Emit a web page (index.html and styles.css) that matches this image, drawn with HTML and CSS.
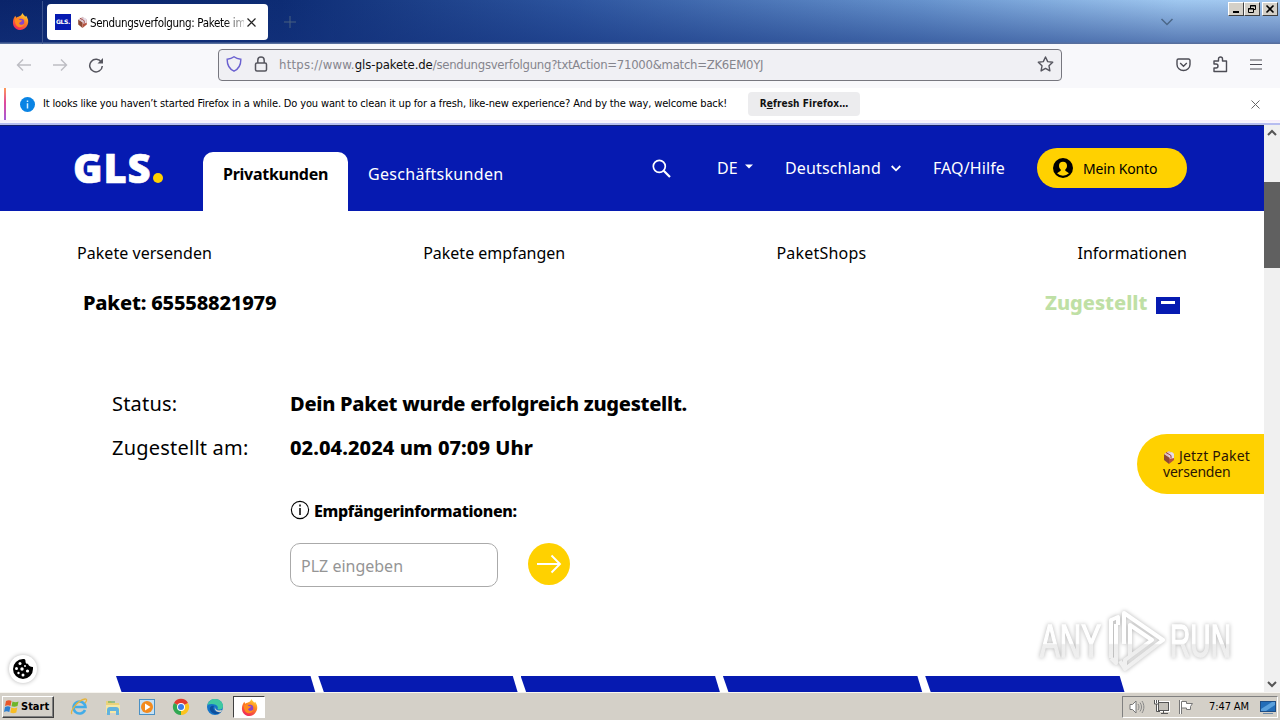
FILE: index.html
```html
<!DOCTYPE html>
<html lang="de">
<head>
<meta charset="utf-8">
<title>Sendungsverfolgung: Pakete im Blick</title>
<link rel="stylesheet" href="styles.css">
</head>
<body>
<svg class="defs" width="0" height="0">
  <defs>
    <linearGradient id="flame" x1="0.8" y1="0" x2="0.3" y2="1"><stop offset="0" stop-color="#ffe23e"/><stop offset=".4" stop-color="#ff8a1f"/><stop offset="1" stop-color="#f0245c"/></linearGradient>
    <symbol id="firefox" viewBox="0 0 18 18">
      <path d="M9 3C10 2.500 10.500 1 11 0c1 2 2 2.500 3 4l1-1c2 3 3 6 1.500 9.500C15 16 12 18 9 18 4 18 1 14.500 1 10c0-3 1-5 2.500-7l1 2C6 4 7.500 4 9 3z" fill="url(#flame)"/>
      <circle cx="9.500" cy="9.500" r="3.500" fill="#8a45c8"/>
      <path d="M3 7c2-2 4-1.500 5 .5l3 .5c-1 1.500-3 1.500-3.500 3 1 2 4 2 5.500 0-.5 3-3 4-5 4-3 0-5-3-5-8z" fill="#ff8b1e"/>
    </symbol>
    <symbol id="box" viewBox="0 0 12 14">
      <path d="M1 4l5 3v7l-5-4z" fill="#8c4a36"/><path d="M6 7l5-3v6l-5 4z" fill="#b5533f"/>
      <path d="M1 4l5-3 5 3-5 3.500z" fill="#d9c0c4"/><path d="M5 4l4-2 2 2v4L7 9z" fill="#e6dce6"/><path d="M3 2.500l5 3v3" stroke="#a03a38" fill="none"/>
    </symbol>
  </defs>
</svg>

<header class="tabbar">
  <div class="pinned"><svg width="17" height="17"><use href="#firefox"/></svg></div>
  <div class="tab">
    <span class="favicon">GLS.</span>
    <svg class="tab-box" width="11" height="12"><use href="#box"/></svg>
    <span class="tab-title">Sendungsverfolgung: Pakete im</span>
    <svg class="tab-close" width="9" height="9" viewBox="0 0 9 9"><path d="M.5.5l8 8m0-8l-8 8" stroke="#222" stroke-width="1.200"/></svg>
  </div>
  <svg class="newtab" width="12" height="12" viewBox="0 0 12 12"><path d="M6 0v12M0 6h12" stroke="#496080"/></svg>
  <svg class="alltabs" width="14" height="8" viewBox="0 0 14 8"><path d="M1.500 1L7 6.500 12.500 1" fill="none" stroke="#4c6788" stroke-width="1.500"/></svg>
  <div class="winbtns">
    <span class="winbtn"><svg width="12" height="10" viewBox="0 0 12 10"><path d="M3 8h6" stroke="#000" stroke-width="2"/></svg></span>
    <span class="winbtn"><svg width="12" height="10" viewBox="0 0 12 10"><path d="M4.500 4V1.500h5v4H8M4 2h6" stroke="#000" fill="none"/><path d="M2.500 4.500h5v4h-5zM2 5h6" stroke="#000" fill="none"/></svg></span>
    <span class="winbtn last"><svg width="12" height="10" viewBox="0 0 12 10"><path d="M2.500 1.500l7 7m0-7l-7 7" stroke="#000" stroke-width="1.600"/></svg></span>
  </div>
</header>

<nav class="toolbar">
  <svg class="back" width="16" height="14" viewBox="0 0 16 14"><path d="M15 7H1.500M7 1.500L1.500 7 7 12.500" fill="none" stroke="#bdbdc3" stroke-width="1.400"/></svg>
  <svg class="forward" width="16" height="14" viewBox="0 0 16 14"><path d="M1 7h13.500M9 1.500L14.500 7 9 12.500" fill="none" stroke="#bdbdc3" stroke-width="1.400"/></svg>
  <svg class="reload" width="16" height="16" viewBox="0 0 16 16"><path d="M13.500 5.500A6.300 6.300 0 1 0 14.300 9" fill="none" stroke="#55555e" stroke-width="1.500"/><path d="M15 1v5.500H9.500z" fill="#55555e"/></svg>
  <div class="urlbar">
    <svg class="shield" width="16" height="16" viewBox="0 0 16 16"><path d="M8 .8C6 2.300 3.500 3 1.200 3.200 1 9 3.500 13 8 15.200c4.500-2.200 7-6.200 6.800-12C12.500 3 10 2.300 8 .8z" fill="none" stroke="#6a60d0" stroke-width="1.400"/></svg>
    <svg class="lock" width="14" height="16" viewBox="0 0 14 16"><rect x="1.500" y="7" width="11" height="8" rx="1.500" fill="none" stroke="#55555e" stroke-width="1.500"/><path d="M3.800 7V4.300a3.200 3.200 0 0 1 6.400 0V7" fill="none" stroke="#55555e" stroke-width="1.500"/></svg>
    <span class="url"><span class="u1">https://www.</span><b>gls-pakete.de</b><span class="u2">/sendungsverfolgung?txtAction=71000&amp;match=ZK6EM0YJ</span></span>
    <svg class="star" width="17" height="16" viewBox="0 0 17 16"><path d="M8.500 1l2.200 4.600 5 .7-3.700 3.500.9 5.100-4.400-2.500-4.400 2.500.9-5.100L1.300 6.300l5-.7z" fill="none" stroke="#55555e" stroke-width="1.400" stroke-linejoin="round"/></svg>
  </div>
  <svg class="pocket" width="15" height="14" viewBox="0 0 15 14"><path d="M2.500 1h10a1.500 1.500 0 0 1 1.500 1.500V6.500a6.500 6 0 0 1-13 0V2.500A1.500 1.500 0 0 1 2.500 1z" fill="none" stroke="#4c4c55" stroke-width="1.400"/><path d="M4.200 5l3.300 3.200L10.800 5" fill="none" stroke="#4c4c55" stroke-width="1.400"/></svg>
  <svg class="ext" width="15" height="17" viewBox="0 0 15 17"><path d="M1 15.500V12h2a2 2 0 0 0 0-4H1V5h4.500V3a2 2 0 0 1 4 0v2h4v10.500z" fill="none" stroke="#4c4c55" stroke-width="1.400" stroke-linejoin="round"/></svg>
  <svg class="menu" width="12" height="11" viewBox="0 0 12 11"><path d="M0 1h12M0 5.500h12M0 10h12" stroke="#4c4c55" stroke-width="1.200"/></svg>
</nav>

<div class="notice">
  <span class="notice-stripe"></span>
  <svg class="info" width="15" height="15" viewBox="0 0 15 15"><circle cx="7.500" cy="7.500" r="7.500" fill="#0a84e4"/><path d="M7.500 6.300v5.200M7.500 3.500v1.500" stroke="#d8f0ff" stroke-width="1.500"/></svg>
  <span class="notice-text">It looks like you haven’t started Firefox in a while. Do you want to clean it up for a fresh, like-new experience? And by the way, welcome back!</span>
  <button class="refresh">R<u>e</u>fresh Firefox…</button>
  <svg class="notice-close" width="9" height="9" viewBox="0 0 9 9"><path d="M.5.5l8 8m0-8l-8 8" stroke="#666"/></svg>
</div>

<div class="view">
  <main class="page">
    <header class="site-head">
      <div class="logo"><span>GLS</span><i></i></div>
      <div class="seg active"><span class="t-priv">Privatkunden</span></div>
      <div class="seg"><span class="t-gesch">Geschäftskunden</span></div>
      <svg class="search" width="19" height="19" viewBox="0 0 19 19"><circle cx="7.300" cy="7.300" r="6" fill="none" stroke="#fff" stroke-width="1.700"/><path d="M11.700 11.700L18 18" stroke="#fff" stroke-width="2.200"/></svg>
      <span class="lang">DE</span>
      <svg class="caret" width="8" height="5" viewBox="0 0 8 5"><path d="M0 .5h8L4 4.500z" fill="#fff"/></svg>
      <span class="country">Deutschland</span>
      <svg class="chev" width="10" height="7" viewBox="0 0 10 7"><path d="M.7 1L5 5.300 9.300 1" fill="none" stroke="#fff" stroke-width="1.800"/></svg>
      <span class="faq">FAQ/Hilfe</span>
      <a class="account">
        <svg width="20" height="20" viewBox="0 0 20 20"><circle cx="10" cy="10" r="10" fill="#000"/><path d="M10 3.700c2.500 0 4 1.600 4 4 0 1.700-.7 3-1.700 3.800v1.300l3.700 2.400a8.500 8.500 0 0 1-12 0l3.700-2.400v-1.300C6.700 10.700 6 9.400 6 7.700c0-2.400 1.500-4 4-4z" fill="#ffd100"/></svg>
        <span>Mein Konto</span>
      </a>
    </header>
    <nav class="subnav">
      <span class="n1">Pakete versenden</span><span class="n2">Pakete empfangen</span><span class="n3">PaketShops</span><span class="n4">Informationen</span>
    </nav>
    <section class="parcel">
      <h1>Paket: 65558821979</h1>
      <span class="state">Zugestellt</span>
      <span class="collapse"></span>
    </section>
    <section class="details">
      <div class="row"><span class="label l1">Status:</span><strong class="s1">Dein Paket wurde erfolgreich zugestellt.</strong></div>
      <div class="row"><span class="label l2">Zugestellt am:</span><strong class="s2">02.04.2024 um 07:09 Uhr</strong></div>
      <div class="recipient">
        <svg width="20" height="20" viewBox="0 0 20 20"><circle cx="10" cy="10" r="8.600" fill="none" stroke="#000" stroke-width="1.100"/><path d="M10 8v7M10 4.500v2" stroke="#000" stroke-width="1.500"/></svg>
        <strong>Empfängerinformationen:</strong>
      </div>
      <form class="zip">
        <div class="field"><span>PLZ eingeben</span></div>
        <span class="go"><svg width="26" height="20" viewBox="0 0 26 20"><path d="M1 10h23M15.500 1.500L24 10l-8.500 8.500" fill="none" stroke="#fff" stroke-width="1.900"/></svg></span>
      </form>
    </section>
    <div class="steps"><i></i><i></i><i></i><i></i><i></i></div>
    <a class="send"><svg width="12" height="14"><use href="#box"/></svg><span class="send1">Jetzt Paket</span><br><span class="send2">versenden</span></a>
    <span class="cookie"><svg width="20" height="20" viewBox="0 0 20 20"><path d="M10 0c2 0 2.500.5 2.500 2.500 0 1.500 1 2.500 2.500 2.300.3 2 2 3.200 5 3.200v2A10 10 0 1 1 10 0z"/><g fill="#fff"><circle cx="7" cy="4.500" r="1.500"/><circle cx="3.500" cy="9.500" r="1.500"/><circle cx="9" cy="10" r="1.700"/><circle cx="14.500" cy="12" r="1.600"/><circle cx="5.500" cy="14" r="1.200"/><circle cx="10" cy="16" r="1.500"/><circle cx="12" cy="7" r="1"/></g></svg></span>
    <svg class="watermark" width="200" height="68" viewBox="0 0 200 68">
      <defs><linearGradient id="fade" x1="0" y1="0" x2="0" y2="68" gradientUnits="userSpaceOnUse"><stop offset="0" stop-color="#fff"/><stop offset=".52" stop-color="#fff"/><stop offset=".54" stop-color="#ededed"/><stop offset="1" stop-color="#f2f2f2"/></linearGradient></defs>
      <g class="wm-text">
        <text x="2" y="49" textLength="61" lengthAdjust="spacingAndGlyphs">ANY</text>
        <text x="132" y="49" textLength="61" lengthAdjust="spacingAndGlyphs">RUN</text>
      </g>
      <path d="M86 36V5l39 27-38 29v-9l27-20-22-15v31M82 53l5 8M73 50V12l7-3v8M73 50l5 5V16" fill="none" stroke="url(#fade)" stroke-width="4" stroke-linejoin="round"/>
    </svg>
  </main>
  <aside class="scrollbar">
    <svg width="10" height="7" viewBox="0 0 10 7"><path d="M1 6l4-4 4 4" fill="none" stroke="#555" stroke-width="2"/></svg>
    <span class="thumb"></span>
    <svg width="10" height="7" viewBox="0 0 10 7"><path d="M1 1l4 4 4-4" fill="none" stroke="#555" stroke-width="2"/></svg>
  </aside>
</div>

<footer class="taskbar">
  <div class="start"><svg width="16" height="16" viewBox="0 0 16 16"><path d="M2 2c2-1 4-1 5.500 0L6.500 7C5 6 3 6 1 7z" fill="#e8562a"/><path d="M8.500 2.500c2 1 4 1 6 0L13.500 7c-2 1-4 1-6 .3z" fill="#6fb52c"/><path d="M1 8c2-1 4-1 5.400 0L5.300 13c-2-1-3.500-1-5.300 0z" fill="#2d7fd0"/><path d="M7.300 8.500c2 1 4 1 6 0l-1 5c-2 1-4 1-6 0z" fill="#f8bd24"/></svg><span>Start</span></div>
  <svg class="ti ie" width="18" height="18" viewBox="0 0 18 18"><path d="M15 12a6 6 0 1 1 .5-3H5" fill="none" stroke="#42ace8" stroke-width="2.600"/><path d="M2 16C-1 14 8 2 15 1c3 0 1 3 0 4" fill="none" stroke="#e5b43e" stroke-width="1.300"/></svg>
  <svg class="ti" width="18" height="18" viewBox="0 0 18 18"><path d="M2 3h5l1 2h7v10H2z" fill="#ead27b"/><path d="M2 7h14v8H2z" fill="#f5e7a5"/><path d="M3 17v-5c0-2 1-3 3-3h6c2 0 3 1 3 3v5h-3v-4H6v4z" fill="#62b3de"/><path d="M4 4h7" stroke="#55a955"/></svg>
  <svg class="ti" width="18" height="18" viewBox="0 0 18 18"><rect x="1.500" y="1.500" width="15" height="15" fill="#c6e1f4" stroke="#4a90c4"/><circle cx="9" cy="9" r="6" fill="#f38a1d"/><path d="M7 5.500v7L12.500 9z" fill="#fff"/></svg>
  <svg class="ti" width="18" height="18" viewBox="0 0 18 18"><path d="M9 9L2 5a8 8 0 0 1 14 0z" fill="#e33b2e"/><path d="M9 9v8A8 8 0 0 1 2 5z" fill="#31a852"/><path d="M9 9l7-4A8 8 0 0 1 9 17z" fill="#fcc31e"/><circle cx="9" cy="9" r="4" fill="#fff"/><circle cx="9" cy="9" r="3" fill="#3b7de8"/></svg>
  <svg class="ti" width="18" height="18" viewBox="0 0 18 18"><circle cx="9" cy="9" r="8" fill="#1675c8"/><path d="M1.500 7C3 2 6 1 9 1c5 0 8 3.500 8 7 0 3-2.500 4-5 3.500-1-.5 0-1-.2-2.500C11 6 5 5 1.500 7z" fill="#3fc9a1"/><path d="M8 8c-2 3 1 7 7 6-3 3-9 3-11-2-1-3 2-5 4-4z" fill="#0d4f9e"/><path d="M9 9c0 3 3 4 7 3l-1 2c-4 1-7-2-6-5z" fill="#d5d1c8"/></svg>
  <span class="task-active"><svg width="17" height="17"><use href="#firefox"/></svg></span>
  <div class="tray">
    <svg width="16" height="16" viewBox="0 0 16 16"><path d="M1 5.500h2.500L7 2v12l-3.500-3.500H1z" fill="#fff" stroke="#777"/><path d="M9 5c1.300 2 1.300 4 0 6M11 3.500c2 3 2 6 0 9M13 2c2.500 4 2.500 8 0 12" fill="none" stroke="#888"/></svg>
    <svg width="17" height="16" viewBox="0 0 17 16"><rect x="5.500" y="3.500" width="10" height="8" fill="#c8c5be" stroke="#fff" stroke-width="3"/><rect x="5.500" y="3.500" width="10" height="8" fill="#c4c1ba" stroke="#555"/><path d="M8 14.500h7M10.500 12v2M3.500 5v7.500H7" fill="none" stroke="#555"/><path d="M1.500 1v4h4V1M3.500 1v3" fill="#fff" stroke="#555"/></svg>
    <svg width="17" height="16" viewBox="0 0 17 16"><path d="M2.500 1v14" stroke="#fff" stroke-width="3"/><path d="M1.500 1v14M3.500 8v7" stroke="#777"/><path d="M3.500 2.500h5v2h6l-2 3 0 3h-4v-1.500h-5z" fill="#fff" stroke="#777"/></svg>
    <span class="clock">7:47 AM</span>
    <svg class="desk" width="16" height="13" viewBox="0 0 16 13"><rect x=".5" y=".5" width="15" height="10" fill="#236db8" stroke="#1e4d85"/><path d="M1 8L12 1h3v3L6 10H1z" fill="#5aa0dc"/><path d="M3 12.500h10" stroke="#6d8aa8"/></svg>
  </div>
</footer>
</body>
</html>
```
FILE: styles.css
```css
* { box-sizing: border-box; }
body { margin: 0; width: 1280px; height: 720px; overflow: hidden; display: flex; flex-direction: column; background: #fff; color: #000; font-family: "Noto Sans", sans-serif; white-space: nowrap; }
svg { display: block; flex: none; }
.defs { position: absolute; }
span, strong { flex: none; }

.tabbar { height: 44px; flex: none; display: flex; align-items: center; background: linear-gradient(180deg, rgba(10,40,120,0) 0%, rgba(20,50,125,.5) 95%, #576f9e 98%), linear-gradient(90deg, #0a246a 0%, #0d2c74 22%, #2d559f 45%, #6793cd 72%, #a0c8f0 92%, #a6caf0 100%); font-family: "DejaVu Sans Condensed", "DejaVu Sans", sans-serif; }
.pinned { width: 43px; height: 43px; padding: 12px 0 0 12px; border-right: 1px solid #3b538e; }
.tab { width: 221px; height: 36px; margin-left: 4px; padding-left: 8px; display: flex; align-items: center; background: #fff; border-radius: 4px; }
.favicon { width: 16px; height: 16px; background: #061ab1; color: #fff; font: bold 6px/16px "DejaVu Sans", sans-serif; text-align: center; letter-spacing: -.3px; }
.tab-box { margin-left: 6px; }
.tab-title { width: 154px; margin-left: 2px; overflow: hidden; font-size: 11.500px; letter-spacing: -.32px; -webkit-mask-image: linear-gradient(90deg, #000 134px, transparent 160px); padding-top: 2px; }
.tab-close { margin-left: 3px; }
.newtab { margin-left: 16px; }
.alltabs { margin-left: 864px; }
.winbtns { display: flex; margin-left: 54px; align-self: flex-start; padding-top: 2px; }
.winbtn { width: 16px; height: 14px; background: #d4d0c8; border: 1px solid; border-color: #fff #404040 #404040 #fff; display: flex; align-items: center; justify-content: center; }
.winbtn svg { margin: 0 -1px; }
.winbtn.last { margin-left: 2px; }

.toolbar { height: 44px; flex: none; display: flex; align-items: center; background: #f8f8fb; padding: 0 0 3px 16px; }
.forward { margin-left: 20px; }
.reload { margin-left: 20px; }
.urlbar { width: 844px; height: 32px; margin-left: 114px; padding: 0 0 1px 7px; display: flex; align-items: center; background: #f0f0f4; border: 1px solid #77777f; border-radius: 4px; }
.lock { margin-left: 12px; }
.url { width: 750px; margin-left: 11px; padding-top: 1px; font: 13px/18px "DejaVu Sans Condensed", "DejaVu Sans", sans-serif; color: #85858d; }
.url b { font-weight: normal; color: #111; letter-spacing: -.1px; }
.u1 { letter-spacing: .22px; }
.u2 { letter-spacing: -.27px; }
.star { margin-left: 8px; }
.pocket { margin-left: 114px; }
.ext { margin-left: 22px; }
.menu { margin-left: 22px; }

.notice { height: 37px; flex: none; display: flex; align-items: center; background: linear-gradient(180deg, #fff 0, #fff 32px, #f7ecfb 32px, #f8f6fc 35px, #b7bdf0 35px); padding-bottom: 5px; padding-left: 4px; font-family: "DejaVu Sans Condensed", "DejaVu Sans", sans-serif; }
.notice-stripe { width: 2px; height: 32px; background: linear-gradient(#ff9a56, #e0489b 45%, #a45bd8); }
.info { margin-left: 14px; }
.notice-text { width: 705px; margin-left: 8px; padding-bottom: 2px; font-size: 11px; letter-spacing: -.148px; }
.refresh { width: 112px; height: 24px; padding: 0; border: 0; border-radius: 4px; background: #ececee; font: bold 10px/24px "DejaVu Sans Condensed", "DejaVu Sans", sans-serif; letter-spacing: .1px; color: #111; }
.notice-close { margin-left: 391px; }

.view { height: 567px; flex: none; display: flex; }
.page { width: 1264px; height: 567px; position: relative; overflow: hidden; }
.site-head { height: 86px; background: #061ab1; border-top: 1px solid #142069; color: #fff; display: flex; align-items: center; padding: 0 0 1px 73px; font-size: 16px; }
.logo { width: 130px; display: flex; align-items: flex-end; font: 900 40px/40px "Noto Sans", sans-serif; }
.logo span { width: 79px; letter-spacing: .8px; -webkit-text-stroke: .6px #fff; }
.logo i { width: 10px; height: 10px; border-radius: 5px; background: #ffd100; margin: 0 0 5px 1px; }
.seg { height: 59px; align-self: flex-end; margin-bottom: -1px; padding: 11px 20px 0; line-height: 22px; }
.seg.active { width: 145px; background: #fff; color: #000; font-weight: 700; border-radius: 10px 10px 0 0; }
.t-priv { letter-spacing: -.27px; }
.t-gesch { letter-spacing: .3px; }
.search { margin-left: 129px; }
.seg:nth-child(3) { width: 175px; }
.lang { width: 22px; margin-left: 46px; }
.caret { margin-left: 6px; margin-top: -4px; }
.country { width: 98px; margin-left: 32px; letter-spacing: .13px; }
.chev { margin-left: 8px; }
.faq { width: 74px; margin-left: 32px; letter-spacing: .1px; }
.account { width: 150px; height: 40px; border-radius: 20px; margin-left: 30px; padding-left: 16px; background: #ffd100; color: #000; display: flex; align-items: center; gap: 10px; font-size: 14px; letter-spacing: -.15px; }
.subnav { height: 68px; padding: 30px 77px 0; display: flex; justify-content: space-between; font-size: 16px; line-height: 24px; }
.n1 { letter-spacing: .04px; }
.n3 { letter-spacing: .2px; }
.parcel { height: 48px; padding: 10px 84px 0 83px; display: flex; font-size: 20px; font-weight: 800; line-height: 28px; }
.parcel h1 { margin: 0; width: 962px; font: inherit; letter-spacing: -.18px; }
.state { width: 103px; color: #bfe0a5; }
.collapse { width: 24px; height: 17px; margin: 8px 0 0 8px; background: #061ab1; padding: 4px 5px; }
.collapse::before { content: ""; display: block; width: 14px; height: 3px; background: #fff; }
.details { padding: 55px 0 0 112px; font-size: 20px; }
.row { display: flex; height: 44px; line-height: 44px; }
.label { width: 178px; }
.l1 { letter-spacing: .2px; }
.l2 { letter-spacing: .22px; }
strong { font-weight: 800; }
.s1 { letter-spacing: -.27px; }
.s2 { letter-spacing: .05px; }
.recipient { display: flex; align-items: center; gap: 4px; margin: 29px 0 0 178px; height: 24px; font-size: 16px; letter-spacing: -.37px; }
.recipient svg { margin-top: -2px; }
.zip { margin: 20px 0 0 178px; display: flex; align-items: center; gap: 30px; }
.field { width: 208px; height: 44px; border: 1px solid #aaa; border-radius: 10px; padding: 2px 0 0 10px; line-height: 40px; font-size: 16px; color: #959595; }
.go { width: 42px; height: 42px; border-radius: 50%; background: #ffd100; display: flex; align-items: center; justify-content: center; margin-top: -2px; }
.steps { display: flex; margin: 89px 0 0 116px; }
.steps i { width: 202.300px; flex: none; height: 26px; background: #061ab1; clip-path: polygon(0 0, 194.500px 0, 202.300px 26px, 9px 26px); }

.send { position: absolute; right: 0; top: 309px; width: 127px; height: 60px; padding: 14px 0 0 26px; border-radius: 30px 0 0 30px; background: #ffd100; font-size: 14px; line-height: 16px; color: #2b1405; }
.send svg { display: inline-block; vertical-align: -3px; margin-right: 4px; }
.send1 { letter-spacing: .2px; }
.send2 { letter-spacing: -.2px; }
.cookie { position: absolute; left: 9px; top: 530px; width: 28px; height: 28px; border-radius: 50%; background: #fff; box-shadow: 0 0 4px rgba(0,0,0,.3); display: flex; align-items: center; justify-content: center; }
.watermark { position: absolute; left: 1038px; top: 483px; filter: drop-shadow(0 0 2px rgba(0,0,0,.3)); }
.wm-text { fill: url(#fade); stroke: url(#fade); stroke-width: 1.500px; font: 46px "Liberation Sans", sans-serif; }

.scrollbar { width: 16px; background: #f0f0f0; display: flex; flex-direction: column; align-items: center; padding: 4px 0 4px; }
.thumb { width: 16px; height: 86px; margin: 46px 0 auto; background: #606060; }

.taskbar { height: 28px; flex: none; background: #d4d0c8; border-top: 1px solid #f7f5f0; display: flex; align-items: center; padding: 1px 2px 0 2px; }
.start { width: 52px; height: 22px; display: flex; align-items: center; gap: 1px; padding-left: 1px; border: 1px solid; border-color: #fff #404040 #404040 #fff; box-shadow: inset -1px -1px #808080; font: bold 11px/20px "DejaVu Sans Condensed", sans-serif; }
.ti { margin-left: 16px; }
.task-active { width: 32px; height: 22px; margin-left: 9px; background: #fff; border: 1px solid; border-color: #404040 #fff #fff #404040; display: flex; align-items: center; justify-content: center; }
.tray { height: 22px; width: 156px; margin-left: auto; padding-left: 6px; display: flex; align-items: center; gap: 8px; border: 1px solid; border-color: #808080 #fff #fff #808080; font: 11px/20px "DejaVu Sans Condensed", sans-serif; }
.clock { width: 43px; margin-left: 6px; letter-spacing: -.1px; }
```
